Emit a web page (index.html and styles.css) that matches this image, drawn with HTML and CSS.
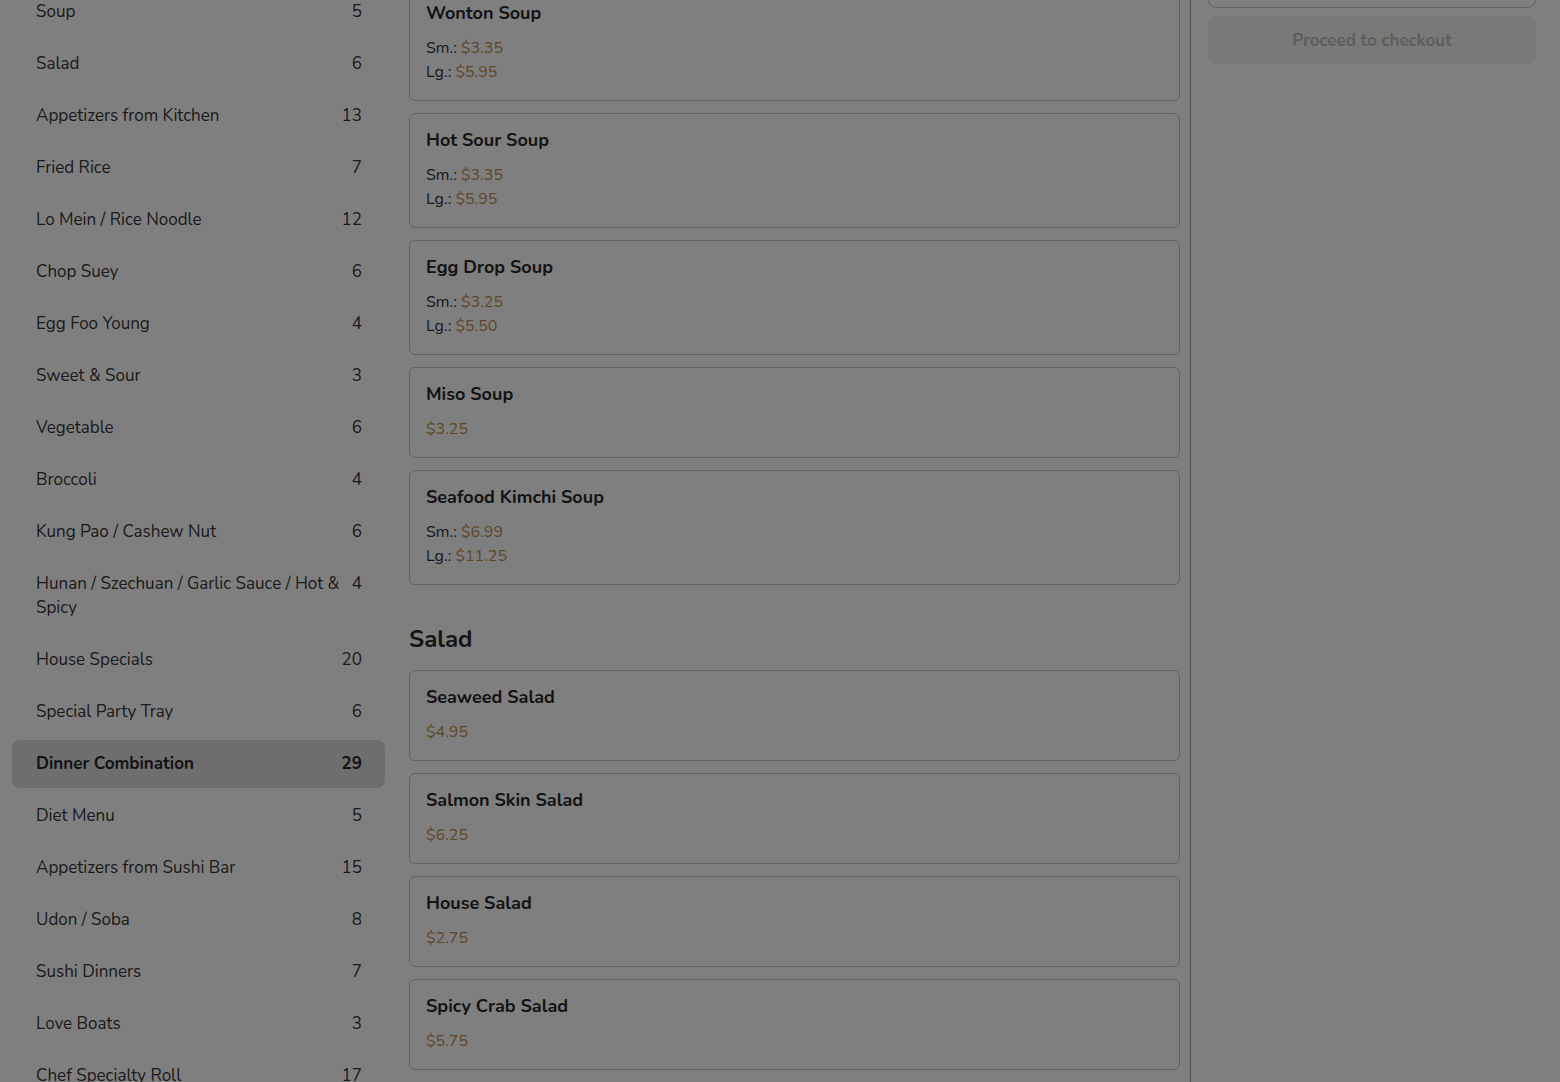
FILE: index.html
```html
<!DOCTYPE html>
<html lang="en">
<head>
<meta charset="utf-8">
<title>Menu</title>
<link rel="stylesheet" href="styles.css">
</head>
<body>
<div class="page">
  <aside class="sidebar">
    <ul class="cat-list">
      <li class="cat"><span class="cat-name">Soup</span><span class="cat-count">5</span></li>
      <li class="cat"><span class="cat-name">Salad</span><span class="cat-count">6</span></li>
      <li class="cat"><span class="cat-name">Appetizers from Kitchen</span><span class="cat-count">13</span></li>
      <li class="cat"><span class="cat-name">Fried Rice</span><span class="cat-count">7</span></li>
      <li class="cat"><span class="cat-name">Lo Mein / Rice Noodle</span><span class="cat-count">12</span></li>
      <li class="cat"><span class="cat-name">Chop Suey</span><span class="cat-count">6</span></li>
      <li class="cat"><span class="cat-name">Egg Foo Young</span><span class="cat-count">4</span></li>
      <li class="cat"><span class="cat-name">Sweet &amp; Sour</span><span class="cat-count">3</span></li>
      <li class="cat"><span class="cat-name">Vegetable</span><span class="cat-count">6</span></li>
      <li class="cat"><span class="cat-name">Broccoli</span><span class="cat-count">4</span></li>
      <li class="cat"><span class="cat-name">Kung Pao / Cashew Nut</span><span class="cat-count">6</span></li>
      <li class="cat"><span class="cat-name">Hunan / Szechuan / Garlic Sauce / Hot &amp; Spicy</span><span class="cat-count">4</span></li>
      <li class="cat"><span class="cat-name">House Specials</span><span class="cat-count">20</span></li>
      <li class="cat"><span class="cat-name">Special Party Tray</span><span class="cat-count">6</span></li>
      <li class="cat active"><span class="cat-name">Dinner Combination</span><span class="cat-count">29</span></li>
      <li class="cat"><span class="cat-name">Diet Menu</span><span class="cat-count">5</span></li>
      <li class="cat"><span class="cat-name">Appetizers from Sushi Bar</span><span class="cat-count">15</span></li>
      <li class="cat"><span class="cat-name">Udon / Soba</span><span class="cat-count">8</span></li>
      <li class="cat"><span class="cat-name">Sushi Dinners</span><span class="cat-count">7</span></li>
      <li class="cat"><span class="cat-name">Love Boats</span><span class="cat-count">3</span></li>
      <li class="cat"><span class="cat-name">Chef Specialty Roll</span><span class="cat-count">17</span></li>
    </ul>
  </aside>

  <main class="menu">
    <section class="menu-section first">
      <div class="cards">
        <div class="card">
          <div class="card-title">Wonton Soup</div>
          <div class="prices">
            <div>Sm.: <span class="price">$3.35</span></div>
            <div>Lg.: <span class="price">$5.95</span></div>
          </div>
        </div>
        <div class="card">
          <div class="card-title">Hot Sour Soup</div>
          <div class="prices">
            <div>Sm.: <span class="price">$3.35</span></div>
            <div>Lg.: <span class="price">$5.95</span></div>
          </div>
        </div>
        <div class="card">
          <div class="card-title">Egg Drop Soup</div>
          <div class="prices">
            <div>Sm.: <span class="price">$3.25</span></div>
            <div>Lg.: <span class="price">$5.50</span></div>
          </div>
        </div>
        <div class="card">
          <div class="card-title">Miso Soup</div>
          <div class="prices">
            <div><span class="price">$3.25</span></div>
          </div>
        </div>
        <div class="card">
          <div class="card-title">Seafood Kimchi Soup</div>
          <div class="prices">
            <div>Sm.: <span class="price">$6.99</span></div>
            <div>Lg.: <span class="price">$11.25</span></div>
          </div>
        </div>
      </div>
    </section>

    <section class="menu-section">
      <h2 class="section-title">Salad</h2>
      <div class="cards">
        <div class="card">
          <div class="card-title">Seaweed Salad</div>
          <div class="prices"><div><span class="price">$4.95</span></div></div>
        </div>
        <div class="card">
          <div class="card-title">Salmon Skin Salad</div>
          <div class="prices"><div><span class="price">$6.25</span></div></div>
        </div>
        <div class="card">
          <div class="card-title">House Salad</div>
          <div class="prices"><div><span class="price">$2.75</span></div></div>
        </div>
        <div class="card">
          <div class="card-title">Spicy Crab Salad</div>
          <div class="prices"><div><span class="price">$5.75</span></div></div>
        </div>
      </div>
    </section>
  </main>

  <aside class="cart">
    <div class="cart-box"></div>
    <button class="checkout" type="button">Proceed to checkout</button>
  </aside>
</div>
<div class="overlay"></div>
</body>
</html>
```

FILE: styles.css
```css
* { box-sizing: border-box; }

html, body {
  margin: 0;
  padding: 0;
  height: 100%;
  overflow: hidden;
}

body {
  font-family: "Nunito", Lato, "Noto Sans", sans-serif;
  color: #333;
  background: #fff;
}

.page {
  display: grid;
  grid-template-columns: 397px 794px 1fr;
  height: 1082px;
}

/* Sidebar */
.sidebar {
  padding: 0 12px;
  overflow: hidden;
}

.cat-list {
  list-style: none;
  margin: -12px 0 0;
  padding: 0;
  display: flex;
  flex-direction: column;
  gap: 4px;
}

.cat {
  display: flex;
  justify-content: space-between;
  align-items: flex-start;
  gap: 12px;
  padding: 12px 23px 12px 24px;
  font-size: 17px;
  line-height: 24px;
  color: #363636;
  border-radius: 8px;
}

.cat-count {
  flex: none;
  text-align: right;
}

.cat.active {
  background: #dcdcdc;
  font-weight: 700;
  color: #262626;
}

/* Menu */
.menu {
  padding: 0 10px 0 12px;
  border-right: 1px solid #a8a8a8;
  overflow: hidden;
}

.menu-section.first {
  margin-top: -14px;
}

.section-title {
  margin: 38px 0 15px;
  font-size: 24px;
  line-height: 32px;
  font-weight: 700;
  color: #2a2a2a;
}

.cards {
  display: flex;
  flex-direction: column;
  gap: 12px;
}

.card {
  border: 1px solid #c6c6c6;
  border-radius: 6px;
  padding: 14px 16px 16px;
}

.card-title {
  font-size: 18px;
  line-height: 24px;
  font-weight: 700;
  color: #282828;
}

.prices {
  margin-top: 11px;
  font-size: 16px;
  line-height: 24px;
  color: #333;
}

.price {
  color: #c08f55;
}

/* Cart */
.cart {
  padding: 0 24px 0 17px;
  display: flex;
  flex-direction: column;
  gap: 8px;
}

.cart-box {
  margin-top: -52px;
  height: 60px;
  border: 1px solid #c6c6c6;
  border-radius: 8px;
}

.checkout {
  height: 48px;
  border: none;
  border-radius: 8px;
  background: #f2f2ef;
  color: #bdbdbd;
  font-family: inherit;
  font-size: 17px;
  font-weight: 700;
}

/* Modal backdrop */
.overlay {
  position: fixed;
  inset: 0;
  background: rgba(0, 0, 0, 0.5);
}
```
